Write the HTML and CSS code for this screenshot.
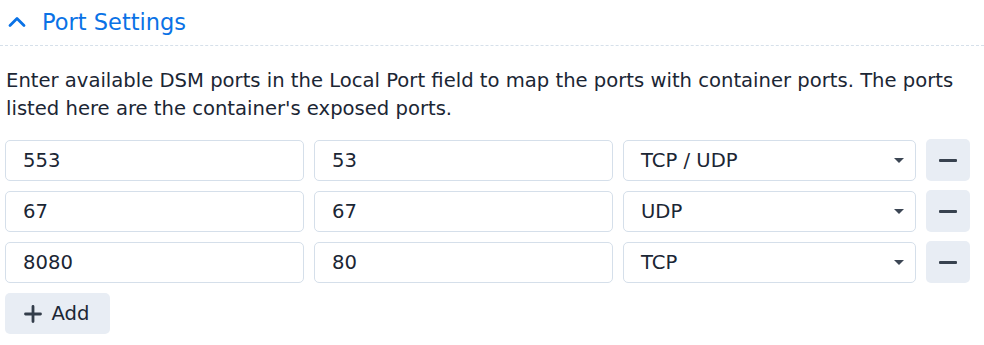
FILE: index.html
```html
<!DOCTYPE html>
<html>
<head>
<meta charset="utf-8">
<link rel="stylesheet" href="styles.css">
</head>
<body>
<div class="panel">
  <div class="header">
    <svg class="chev" width="18" height="12" viewBox="0 0 18 12"><path d="M2 9.5 L9 2.5 L16 9.5" fill="none" stroke="#0a72e6" stroke-width="2.8" stroke-linecap="round" stroke-linejoin="round"/></svg>
    <span class="title">Port Settings</span>
  </div>
  <p class="desc">Enter available DSM ports in the Local Port field to map the ports with container ports. The ports listed here are the container's exposed ports.</p>
  <div class="rows">
    <div class="row">
      <div class="field">553</div>
      <div class="field">53</div>
      <div class="field select">TCP / UDP<span class="caret"></span></div>
      <div class="btn minus"><span class="bar"></span></div>
    </div>
    <div class="row">
      <div class="field">67</div>
      <div class="field">67</div>
      <div class="field select">UDP<span class="caret"></span></div>
      <div class="btn minus"><span class="bar"></span></div>
    </div>
    <div class="row">
      <div class="field">8080</div>
      <div class="field">80</div>
      <div class="field select">TCP<span class="caret"></span></div>
      <div class="btn minus"><span class="bar"></span></div>
    </div>
  </div>
  <div class="btn add">
    <svg width="18" height="18" viewBox="0 0 18 18"><path d="M9 1.5 V16.5 M1.5 9 H16.5" stroke="#333d4a" stroke-width="2.8" stroke-linecap="round"/></svg>
    <span>Add</span>
  </div>
</div>
</body>
</html>
```
FILE: styles.css
```css
html, body { margin: 0; padding: 0; background: #fff; }
body {
  font-family: "DejaVu Sans", Verdana, sans-serif;
  color: #1b2634;
}
.panel { padding: 0 14px 0 5px; }
.header {
  height: 45px;
  display: flex;
  align-items: center;
  border-bottom: 1px dashed #d6e0ea;
  margin-left: -5px;
  margin-right: -14px;
  padding-left: 8px;
}
.chev { margin-right: 16px; margin-top: -2px; }
.title {
  font-size: 22.5px;
  color: #0a72e6;
  margin-top: -1px;
}
.desc {
  margin: 21px 0 17px 1px;
  font-size: 19.6px;
  line-height: 28px;
  color: #1b2634;
}
.rows { display: flex; flex-direction: column; gap: 10px; }
.row {
  display: grid;
  grid-template-columns: 299px 299px 293px 44px;
  gap: 10px;
}
.field {
  height: 41px;
  box-sizing: border-box;
  border: 1px solid #d5dfea;
  border-radius: 5px;
  padding-left: 17px;
  display: flex;
  align-items: center;
  font-size: 19.6px;
  color: #1b2634;
  position: relative;
}
.caret {
  position: absolute;
  right: 11px;
  top: 17px;
  width: 0; height: 0;
  border-left: 5.5px solid transparent;
  border-right: 5.5px solid transparent;
  border-top: 5px solid #3c4654;
}
.btn {
  background: #e8edf4;
  border-radius: 5px;
  height: 42px;
  box-sizing: border-box;
  display: flex;
  align-items: center;
  justify-content: center;
}
.minus { height: 42px; margin-top: -1px; }
.bar { width: 18px; height: 3px; background: #38424f; border-radius: 1px; }
.add {
  margin-top: 10px;
  width: 105px;
  height: 41px;
  gap: 10px;
  padding-right: 2px;
  font-size: 19.6px;
  color: #1b2634;
}
```
